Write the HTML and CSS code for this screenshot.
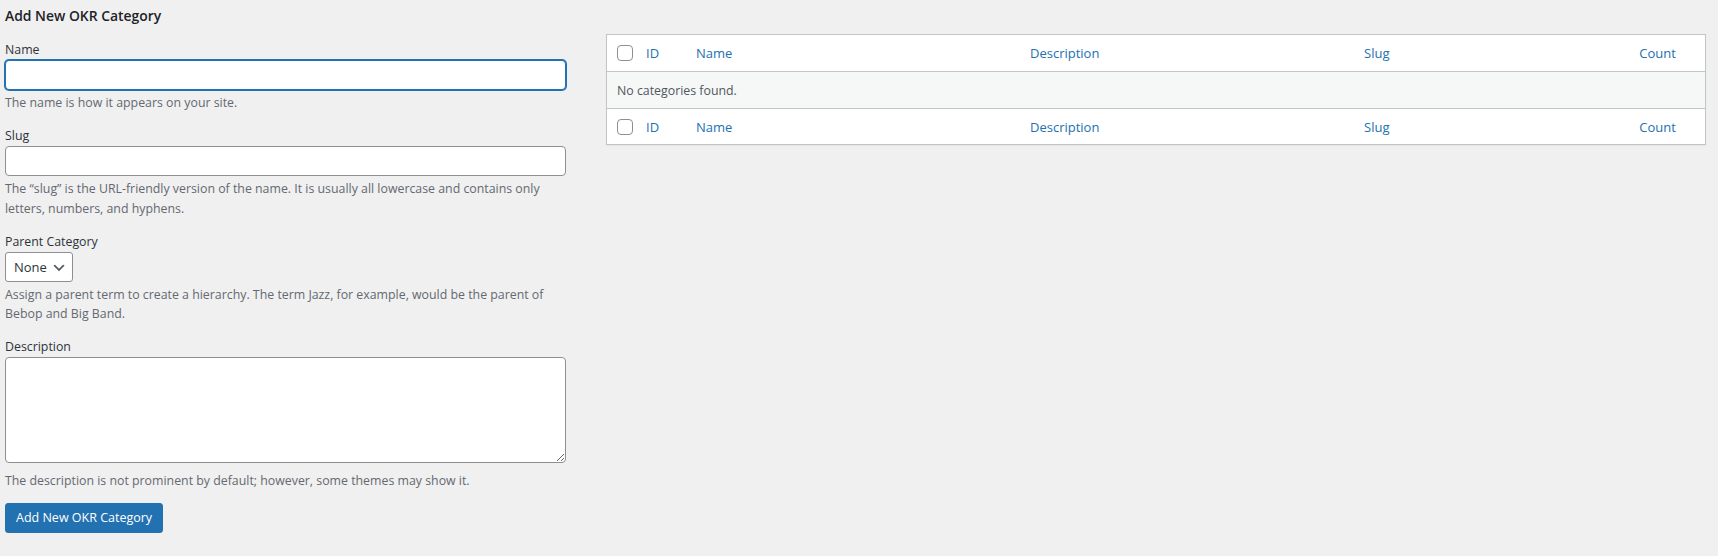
FILE: index.html
```html
<!DOCTYPE html>
<html lang="en">
<head>
<meta charset="utf-8">
<title>Add New OKR Category</title>
<link rel="stylesheet" href="styles.css">
</head>
<body>
<div class="page">
  <div class="col-left">
    <h2 class="form-title">Add New OKR Category</h2>
    <form class="term-form">
      <div class="form-field">
        <label class="field-label" for="tag-name">Name</label>
        <input id="tag-name" class="text-input is-focused" type="text">
        <p class="help">The name is how it appears on your site.</p>
      </div>
      <div class="form-field">
        <label class="field-label" for="tag-slug">Slug</label>
        <input id="tag-slug" class="text-input" type="text">
        <p class="help">The “slug” is the URL-friendly version of the name. It is usually all lowercase and contains only letters, numbers, and hyphens.</p>
      </div>
      <div class="form-field">
        <label class="field-label" for="parent">Parent Category</label>
        <div class="select-wrap">
          <select id="parent" class="select-input">
            <option>None</option>
          </select>
          <svg class="select-arrow" width="16" height="16" viewBox="0 0 20 20" aria-hidden="true"><path d="M5 6l5 5 5-5 2 1-7 7-7-7 2-1z" fill="#50575e"/></svg>
        </div>
        <p class="help">Assign a parent term to create a hierarchy. The term Jazz, for example, would be the parent of Bebop and Big Band.</p>
      </div>
      <div class="form-field">
        <label class="field-label" for="tag-description">Description</label>
        <textarea id="tag-description" class="text-area" rows="5"></textarea>
        <p class="help help-after-area">The description is not prominent by default; however, some themes may show it.</p>
      </div>
      <div class="submit-row">
        <button type="button" class="button-primary">Add New OKR Category</button>
      </div>
    </form>
  </div>
  <div class="col-right">
    <table class="list-table">
      <colgroup>
        <col class="c-cb"><col class="c-id"><col class="c-name"><col class="c-desc"><col class="c-slug"><col class="c-count">
      </colgroup>
      <thead>
        <tr>
          <td class="cell-cb"><input type="checkbox" class="cb"></td>
          <th class="col-head"><a href="#">ID</a></th>
          <th class="col-head"><a href="#">Name</a></th>
          <th class="col-head"><a href="#">Description</a></th>
          <th class="col-head"><a href="#">Slug</a></th>
          <th class="col-head col-num"><a href="#">Count</a></th>
        </tr>
      </thead>
      <tbody>
        <tr class="no-items">
          <td class="no-items-cell" colspan="6">No categories found.</td>
        </tr>
      </tbody>
      <tfoot>
        <tr>
          <td class="cell-cb"><input type="checkbox" class="cb"></td>
          <th class="col-head"><a href="#">ID</a></th>
          <th class="col-head"><a href="#">Name</a></th>
          <th class="col-head"><a href="#">Description</a></th>
          <th class="col-head"><a href="#">Slug</a></th>
          <th class="col-head col-num"><a href="#">Count</a></th>
        </tr>
      </tfoot>
    </table>
  </div>
</div>
</body>
</html>
```

FILE: styles.css
```css
* { box-sizing: border-box; }

html, body {
  margin: 0;
  padding: 0;
  background: #f0f0f1;
}

body {
  font-family: "Open Sans", "Noto Sans", sans-serif;
  font-size: 12.35px;
  color: #3c434a;
}

.page {
  display: flex;
  align-items: flex-start;
  gap: 40px;
  padding: 0 12px 0 5px;
}

.col-left {
  width: 561px;
  flex: 0 0 561px;
}

.col-right {
  flex: 0 0 1100px;
  padding-top: 34px;
}

.form-title {
  margin: 6px 0 14px;
  font-size: 13.9px;
  line-height: 20px;
  font-weight: 600;
  color: #1d2327;
}

.term-form {
  margin: 0;
}

.form-field {
  margin: 0 0 13.5px;
}

.field-label {
  display: block;
  line-height: 20px;
  color: #2c3338;
}

.text-input {
  display: block;
  width: 100%;
  height: 30px;
  margin: 0;
  padding: 0 8px;
  border: 1px solid #8c8f94;
  border-radius: 4px;
  background: #fff;
  font: inherit;
  color: #2c3338;
  outline: none;
}

.text-input.is-focused {
  border-color: #2271b1;
  box-shadow: 0 0 0 1px #2271b1;
}

.help {
  margin: 3px 0 0;
  line-height: 19.5px;
  color: #646970;
}

.help-after-area {
  margin-top: 8px;
}

.select-wrap {
  position: relative;
  display: inline-block;
  vertical-align: top;
}

.select-input {
  display: block;
  width: 68px;
  height: 30px;
  margin: 0;
  padding: 0 24px 0 8px;
  border: 1px solid #8c8f94;
  border-radius: 3px;
  background: #fff;
  font: inherit;
  font-size: 13px;
  color: #2c3338;
  -webkit-appearance: none;
  appearance: none;
  outline: none;
}

.select-arrow {
  position: absolute;
  right: 6px;
  top: 8px;
  pointer-events: none;
}

.text-area {
  display: block;
  width: 561px;
  height: 106px;
  margin: 0;
  padding: 2px 6px;
  border: 1px solid #8c8f94;
  border-radius: 4px;
  background: #fff;
  font: inherit;
  resize: vertical;
  outline: none;
}

.submit-row {
  margin-top: -1px;
}

.button-primary {
  display: inline-block;
  height: 30px;
  padding: 0 10px;
  border: 1px solid #2271b1;
  border-radius: 3px;
  background: #2271b1;
  color: #fff;
  font: inherit;
  font-size: 12.5px;
  line-height: 28px;
  cursor: pointer;
}

/* table */
.list-table {
  width: 1100px;
  table-layout: fixed;
  border-collapse: separate;
  border-spacing: 0;
  border: 1px solid #c3c4c7;
  background: #fff;
  box-shadow: 0 1px 1px rgba(0, 0, 0, 0.04);
}

.c-cb { width: 31px; }
.c-id { width: 50px; }
.c-name { width: 334px; }
.c-desc { width: 334px; }
.c-slug { width: 254px; }
.c-count { width: 95px; }

.list-table th,
.list-table td {
  height: 36px;
  padding: 0 8px;
  vertical-align: middle;
  text-align: left;
  font-weight: 400;
}

.list-table thead th,
.list-table thead td {
  border-bottom: 1px solid #c3c4c7;
  height: 37px;
}

.list-table tfoot th,
.list-table tfoot td {
  border-top: 1px solid #c3c4c7;
  height: 36px;
}

.cell-cb {
  padding: 0 0 0 10px !important;
}

.cb {
  display: block;
  width: 16px;
  height: 16px;
  margin: 0;
  border: 1px solid #8c8f94;
  border-radius: 4px;
  background: #fff;
  -webkit-appearance: none;
  appearance: none;
}

.col-head a {
  color: #2271b1;
  text-decoration: none;
  font-size: 13px;
}

.col-num {
  text-align: center !important;
}

.no-items-cell {
  background: #f6f7f7;
  color: #50575e;
  padding-left: 10px !important;
}
```
